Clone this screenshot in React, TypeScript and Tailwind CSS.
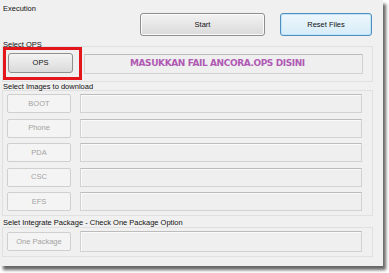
const label = "relative z-10 h-[9px] leading-[9px] pl-[1px] text-[7.5px] text-[#111] whitespace-nowrap";

const DisabledButton = ({ text }: { text: string }) => (
  <div className="flex h-[19px] w-[64px] shrink-0 items-center justify-center rounded-[2px] border border-[#cfcfcf] bg-[#f4f4f4] text-[7.5px] text-[#a3a3a3]">
    {text}
  </div>
);

export default function App() {
  return (
    <div className="h-[273px] w-[389px] bg-white font-['Liberation_Sans',Arial,sans-serif]">
      <div className="flex h-[266px] w-[383px] flex-col bg-[#f0f0f0] pl-[2px] pr-[10px] pt-[4px] shadow-[3px_4px_3px_rgba(0,0,0,0.6)]">
        {/* execution */}
        <div className={label}>Execution</div>
        <div className="flex h-[23px] justify-end gap-[15px] pr-[1px]">
          <button className="w-[125px] rounded-[3px] border border-[#8f8f8f] bg-gradient-to-b from-[#f3f3f3] to-[#dadada] text-[7.5px] text-[#111] shadow-[inset_0_0_0_1px_#fbfbfb]">
            Start
          </button>
          <button className="w-[92px] rounded-[3px] border border-[#4f8fbf] bg-gradient-to-b from-[#eef7fc] to-[#d6ecf8] text-[7.5px] text-[#111] shadow-[inset_0_0_0_1px_#bfe3f7]">
            Reset Files
          </button>
        </div>

        {/* ops */}
        <div className={`${label} mt-[4px]`}>Select OPS</div>
        <div className="mt-[-3px] flex h-[36px] items-start border border-[#e0e0e0]">
          <div className="h-[33px] w-[79px] shrink-0 border-[3px] border-[#e3161c] pl-[2px] pt-[3px]">
            <div className="flex h-[20px] w-[65px] items-center justify-center rounded-[3px] border border-[#8f8f8f] bg-gradient-to-b from-[#f3f3f3] to-[#dadada] text-[7.5px] text-[#111]">
              OPS
            </div>
          </div>
          <div className="ml-[2px] mt-[7px] flex h-[20px] w-[279px] items-center border border-[#d2d2d2] border-t-[#bcbcbc] bg-[#efefef] pl-[45px]">
            <span className="whitespace-nowrap font-['DejaVu_Sans',sans-serif] text-[9px] font-bold tracking-[-0.4px] text-[#b05ab4]">
              MASUKKAN FAIL ANCORA.OPS DISINI
            </span>
          </div>
        </div>

        {/* images */}
        <div className={label}>Select Images to download</div>
        <div className="mt-[-1px] flex flex-col gap-[5.5px] border border-[#e0e0e0] pb-[4px] pl-[4px] pt-[3px]">
          {["BOOT", "Phone", "PDA", "CSC", "EFS"].map((t) => (
            <div key={t} className="flex h-[19px] items-center gap-[9px]">
              <DisabledButton text={t} />
              <div className="h-[19px] w-[282px] border border-[#d2d2d2] border-t-[#bcbcbc] bg-[#efefef] shadow-[inset_1px_1px_0_#fafafa]" />
            </div>
          ))}
        </div>

        {/* package */}
        <div className={`${label} mt-[2px]`}>Selet Integrate Package - Check One Package Option</div>
        <div className="flex items-center gap-[9px] border border-[#e0e0e0] pb-[4px] pl-[4px] pt-[3px]">
          <DisabledButton text="One Package" />
          <div className="h-[21px] w-[282px] border border-[#d2d2d2] border-t-[#bcbcbc] bg-[#efefef] shadow-[inset_1px_1px_0_#fafafa]" />
        </div>
      </div>
    </div>
  );
}
